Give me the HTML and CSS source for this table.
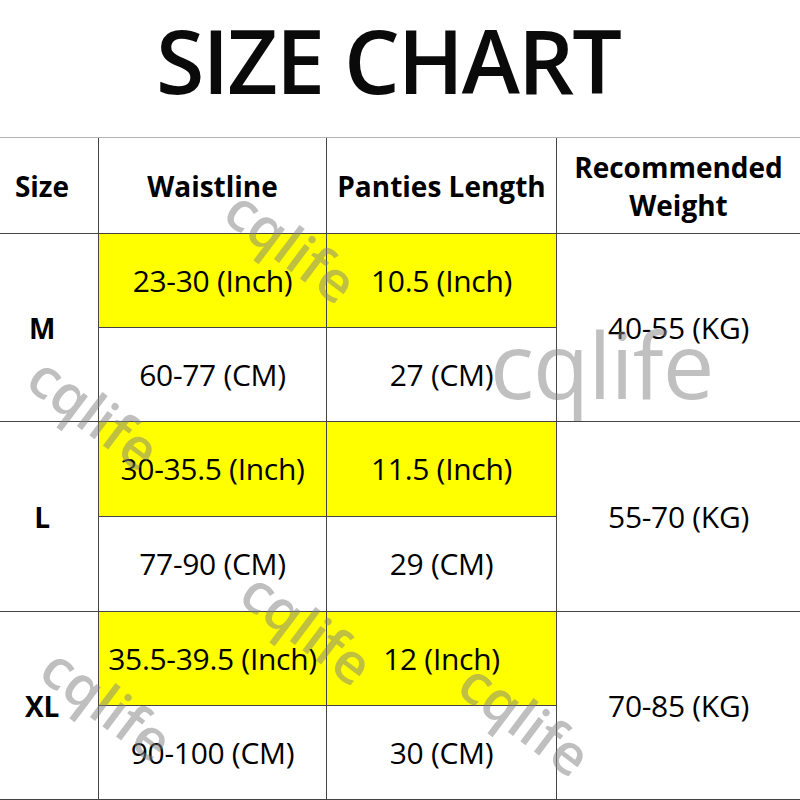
FILE: index.html
```html
<!DOCTYPE html>
<html>
<head>
<meta charset="utf-8">
<link rel="stylesheet" href="styles.css">
</head>
<body>
<div class="page">
  <h1 class="title">SIZE CHART</h1>
  <div class="chart">
    <div class="cell head c1">Size</div>
    <div class="cell head">Waistline</div>
    <div class="cell head">Panties Length</div>
    <div class="cell head">Recommended<br>Weight</div>

    <div class="cell size c1 span2">M</div>
    <div class="cell yellow">23-30 (Inch)</div>
    <div class="cell yellow">10.5 (Inch)</div>
    <div class="cell span2">40-55 (KG)</div>
    <div class="cell">60-77 (CM)</div>
    <div class="cell">27 (CM)</div>

    <div class="cell size c1 span2">L</div>
    <div class="cell yellow">30-35.5 (Inch)</div>
    <div class="cell yellow">11.5 (Inch)</div>
    <div class="cell span2">55-70 (KG)</div>
    <div class="cell">77-90 (CM)</div>
    <div class="cell">29 (CM)</div>

    <div class="cell size c1 span2">XL</div>
    <div class="cell yellow">35.5-39.5 (Inch)</div>
    <div class="cell yellow">12 (Inch)</div>
    <div class="cell span2">70-85 (KG)</div>
    <div class="cell">90-100 (CM)</div>
    <div class="cell">30 (CM)</div>
  </div>

  <span class="mark m1">cqlife</span>
  <span class="mark m2">cqlife</span>
  <span class="mark big">cqlife</span>
  <span class="mark m4">cqlife</span>
  <span class="mark m5">cqlife</span>
  <span class="mark m6">cqlife</span>
</div>
</body>
</html>
```

FILE: styles.css
```css
html, body {
  margin: 0;
  padding: 0;
  background: #fff;
}
.page {
  position: relative;
  width: 800px;
  height: 800px;
  overflow: hidden;
  font-family: "Open Sans", "Noto Sans", sans-serif;
  color: #000;
}
.title {
  margin: 0;
  height: 137px;
  box-sizing: border-box;
  padding: 0 24px 0 0;
  text-align: center;
  font-size: 88px;
  font-weight: 600;
  line-height: normal;
  letter-spacing: -2px;
  color: #0a0a0a;
}
.chart {
  display: grid;
  grid-template-columns: 98px 228px 230px 244px;
  grid-template-rows: 95px 94px 94px 95px 95px 94px 94px;
  border-top: 1px solid #b4b4b4;
  border-bottom: 2px solid #444;
}
.cell {
  display: flex;
  align-items: center;
  justify-content: center;
  text-align: center;
  box-sizing: border-box;
  border-left: 1.5px solid #444;
  border-top: 1.5px solid #444;
  font-size: 30px;
  line-height: 38px;
  letter-spacing: -0.3px;
}
.head {
  border-top: none;
  font-weight: 700;
  font-size: 28px;
  letter-spacing: 0;
}
.c1 {
  border-left: none;
  padding-right: 14px;
}
.size {
  font-weight: 700;
  font-size: 28px;
}
.span2 {
  grid-row: span 2;
}
.yellow {
  background: #ffff00;
}
.mark {
  position: absolute;
  font-family: "Open Sans", "Noto Sans", sans-serif;
  font-size: 56px;
  font-weight: 600;
  line-height: 1;
  color: rgba(128, 128, 128, 0.5);
  transform: translate(-50%, -50%) rotate(37deg);
  white-space: nowrap;
}
.m1 { left: 292px; top: 245px; }
.m2 { left: 95px; top: 412px; }
.m4 { left: 308px; top: 627px; }
.m5 { left: 108px; top: 703px; }
.m6 { left: 526px; top: 718px; }
.big {
  left: 490px;
  top: 318px;
  font-size: 92px;
  font-weight: 400;
  color: rgba(130, 130, 130, 0.5);
  transform: none;
  letter-spacing: -1px;
}
```
